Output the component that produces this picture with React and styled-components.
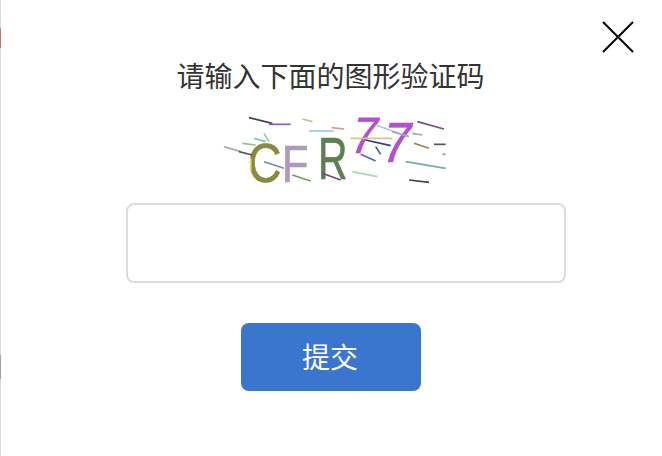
import React from "react";
import styled, { createGlobalStyle } from "styled-components";

const Global = createGlobalStyle`
	html, body {
		margin: 0;
		padding: 0;
		background: #fff;
		overflow: hidden;
	}
	body {
		font-family: "Noto Sans CJK SC", "Liberation Sans", sans-serif;
	}
`;

const Dialog = styled.div`
	position: relative;
	box-sizing: border-box;
	width: 662px;
	height: 456px;
	padding-top: 55px;
	border-left: 1px solid #dcdcdc;
	display: flex;
	flex-direction: column;
	align-items: center;
	background: #fff;
`;

const EdgeSpeck = styled.span`
	position: absolute;
	left: -1px;
	top: ${props => props.top}px;
	width: 1px;
	height: ${props => props.size}px;
	background: ${props => props.color};
`;

const CloseButton = styled.button`
	position: absolute;
	top: 20px;
	right: 27px;
	width: 34px;
	height: 34px;
	padding: 0;
	border: 0;
	background: none;
	cursor: pointer;
`;

const Title = styled.h2`
	margin: 0 0 22px -2px;
	height: 40px;
	line-height: 40px;
	font-size: 28px;
	font-weight: 400;
	color: #333;
`;

const Captcha = styled.svg`
	display: block;
	width: 225px;
	height: 67px;
	margin: 0 0 19px 3px;
	overflow: visible;
	filter: blur(0.35px);
`;

const CodeInput = styled.input`
	box-sizing: border-box;
	display: block;
	width: 440px;
	height: 80px;
	margin: 0 0 40px 29px;
	padding: 0 16px;
	border: 2px solid #ddd;
	border-radius: 8px;
	outline: none;
	font-size: 28px;
	background: #fff;
`;

const Submit = styled.button`
	width: 180px;
	height: 68px;
	margin-left: -1px;
	padding: 0 2px 2px 0;
	border: 0;
	border-radius: 8px;
	background: #3a75ce;
	color: #fff;
	font-family: inherit;
	font-size: 28px;
	cursor: pointer;
`;

const noise = [
	[120, 38, 190, 55, "#444"],
	[180, 58, 245, 58, "#a04cc0"],
	[280, 42, 310, 50, "#c9b9a0"],
	[300, 78, 375, 78, "#9cc8dc"],
	[368, 68, 405, 72, "#e09a70"],
	[135, 100, 170, 110, "#7cc8b8"],
	[165, 85, 180, 110, "#8fcf9f"],
	[45, 125, 95, 140, "#aaa"],
	[90, 140, 130, 150, "#555"],
	[100, 115, 140, 120, "#9dbf80"],
	[125, 160, 125, 200, "#e6e070"],
	[165, 170, 225, 190, "#6d8da8"],
	[250, 210, 305, 228, "#6f9c5c"],
	[340, 205, 395, 225, "#6a4a80"],
	[430, 200, 505, 215, "#a8d8b0"],
	[425, 100, 550, 100, "#d6c87c"],
	[470, 105, 545, 122, "#2c3f90"],
	[500, 125, 515, 148, "#3c5c98"],
	[455, 148, 500, 168, "#5468b8"],
	[500, 60, 570, 85, "#a8ccd8"],
	[550, 80, 600, 95, "#a0a8b0"],
	[625, 50, 705, 72, "#7a4a80"],
	[610, 85, 640, 90, "#8cb88c"],
	[615, 115, 660, 130, "#a87850"],
	[675, 118, 710, 118, "#555"],
	[590, 170, 710, 190, "#6fb0a8"],
	[600, 225, 660, 232, "#444"],
	[700, 148, 710, 148, "#999"],
];

// x, baseline, font size, horizontal squeeze, slant: same units as the noise lines
const glyphs = [
	["C", 116, 232, 165, "#8a8a3e", 0.85, 0],
	["F", 218, 232, 155, "#b19ab9", 0.85, 0],
	["R", 327, 222, 175, "#5d7f52", 0.7, 0],
	["7", 416, 145, 153, "#b350d2", 0.9, 14],
	["7", 510, 170, 170, "#b350d2", 0.9, 12],
];

export default function App() {
	return (
		<>
			<Global />
			<Dialog>
				<EdgeSpeck top={28} size={20} color="#c47a76" />
				<EdgeSpeck top={355} size={24} color="#a0a0a0" />
				<CloseButton aria-label="关闭">
					<svg width="34" height="34" viewBox="0 0 34 34">
						<path d="M2 2 L32 32 M32 2 L2 32" stroke="#000" strokeWidth="2" fill="none" />
					</svg>
				</CloseButton>
				<Title>请输入下面的图形验证码</Title>
				<Captcha viewBox="36 36 675 201">
					{glyphs.map(([ch, x, y, size, color, squeeze, slant], i) => (
						<text
							key={i}
							transform={`translate(${x} ${y}) skewX(${-slant}) scale(${squeeze} 1)`}
							fontFamily="Liberation Sans, sans-serif"
							fontSize={size}
							fill={color}
							stroke={color}
							strokeWidth="2"
						>
							{ch}
						</text>
					))}
					{noise.map(([x1, y1, x2, y2, color], i) => (
						<line key={i} x1={x1} y1={y1} x2={x2} y2={y2} stroke={color} strokeWidth="5" />
					))}
				</Captcha>
				<CodeInput type="text" />
				<Submit>提交</Submit>
			</Dialog>
		</>
	);
}
